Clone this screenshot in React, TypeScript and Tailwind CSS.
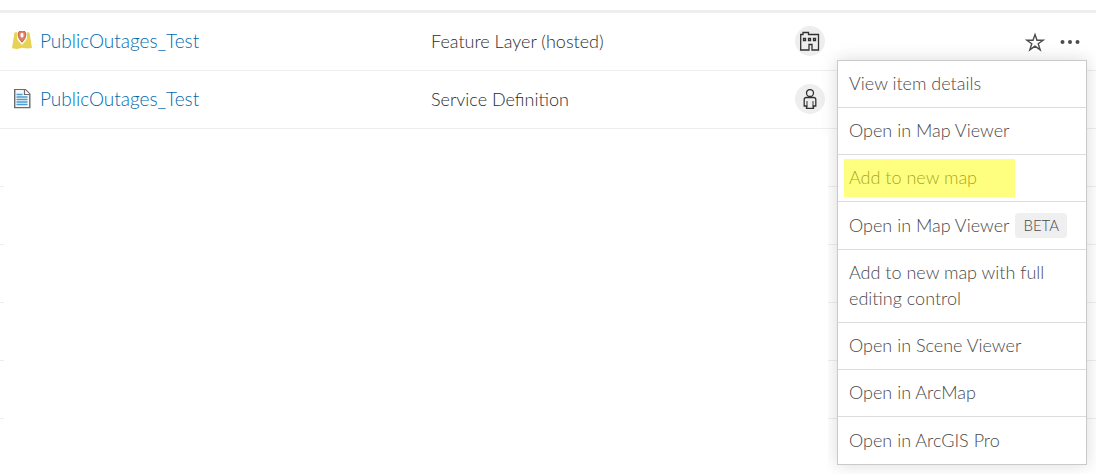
import { ReactNode } from "react";

type Item = {
    title: string;
    type: string;
    icon: ReactNode;
    sharing: "organization" | "owner";
    menuOpen?: boolean;
};

type MenuEntry = {
    label: string;
    highlighted?: boolean;
    beta?: boolean;
};

const menuEntries: MenuEntry[] = [
    { label: "View item details" },
    { label: "Open in Map Viewer" },
    { label: "Add to new map", highlighted: true },
    { label: "Open in Map Viewer", beta: true },
    { label: "Add to new map with full editing control" },
    { label: "Open in Scene Viewer" },
    { label: "Open in ArcMap" },
    { label: "Open in ArcGIS Pro" },
];

function FeatureLayerIcon() {
    return (
        <svg width="20" height="20" viewBox="0 0 20 20" aria-hidden="true">
            <path d="M2.500 1.500 7 1l3 .8 3-.8 4.500.6L20 17l-5 .4-5-.6-5 1.200-5-.7z" fill="#e6d255" />
            <path d="M5 0h10v6.500c0 3-2.500 4.800-5 7.500-2.500-2.700-5-4.500-5-7.500z" fill="#fffbe9" />
            <path d="M10-.3c2.600 0 3.800 1.500 3.800 3.700 0 3-1.600 5.300-3.800 7.800-2.200-2.500-3.800-4.800-3.800-7.800C6.200 1.200 7.400-.3 10-.3z" fill="#dd8064" stroke="#c65d40" />
            <rect x="8.600" y="2" width="2.800" height="4.500" rx="1.200" fill="#fff" />
        </svg>
    );
}

function DocumentIcon() {
    return (
        <svg width="18" height="20" viewBox="0 0 18 20" aria-hidden="true">
            <path d="M1.700.2h10.300l4.800 4.800v13.600H1.700z" fill="#f7f7f7" stroke="#6b6b6b" strokeWidth="1.400" />
            <path d="M11.500.2v5.300h5.300" fill="#fff" stroke="#6b6b6b" strokeWidth="1.200" />
            <path d="M3.500 5.500h6M3.500 8h11M3.500 10.500h11M3.500 13h11M3.500 15.500h11" stroke="#4b9cd3" strokeWidth="1.300" />
        </svg>
    );
}

function OrganizationIcon() {
    return (
        <svg width="20" height="20" viewBox="0 0 20 20" fill="none" stroke="#323232" strokeWidth="1.300" aria-hidden="true">
            <path d="M.7 19V3.500h2.300V1.500h5.500v2h10V19h-6.500v-5.500h-3V19z" />
            <path d="M3.500 7.500h2v2h-2zM8.500 7.500h2v2h-2zM13.500 7.500h2v2h-2z" />
        </svg>
    );
}

function OwnerIcon() {
    return (
        <svg width="20" height="20" viewBox="0 0 20 20" fill="none" stroke="#323232" strokeWidth="1.300" aria-hidden="true">
            <circle cx="10" cy="4" r="3.500" />
            <path d="M6.500 8.500h7c1.600 0 2.300.8 2.300 2v6.500h-2.300v2.300h-7v-2.300H4.200v-6.500c0-1.200.7-2 2.300-2z" />
            <path d="M7 12v6.500M13 12v6.500" strokeWidth="1" />
        </svg>
    );
}

function StarIcon() {
    return (
        <svg width="20" height="20" viewBox="0 0 20 20" fill="none" stroke="#4c4c4c" strokeWidth="1.400" aria-hidden="true">
            <path d="m10 2.500 2 5.700h6.200l-5 3.600 2 6.100-5.200-3.700-5.200 3.700 2-6.100-5-3.600H8z" />
        </svg>
    );
}

function MoreIcon() {
    return (
        <svg width="20" height="20" viewBox="0 0 20 20" fill="#4c4c4c" aria-hidden="true">
            <circle cx="2.500" cy="10" r="2" />
            <circle cx="10" cy="10" r="2" />
            <circle cx="17.500" cy="10" r="2" />
        </svg>
    );
}

const items: Item[] = [
    { title: "PublicOutages_Test", type: "Feature Layer (hosted)", icon: <FeatureLayerIcon />, sharing: "organization", menuOpen: true },
    { title: "PublicOutages_Test", type: "Service Definition", icon: <DocumentIcon />, sharing: "owner" },
];

function ItemMenu() {
    return (
        <ul className="absolute top-[47px] right-[9px] z-10 w-[250px] border border-[#cacaca] bg-white text-[#4a4a4a] shadow-[0_0_16px_rgba(0,0,0,0.15)]">
            {menuEntries.map((entry, index) => (
                <li key={index} className="relative border-b border-[#dcdcdc] last:border-b-0 last:pt-px">
                    <button type="button" className="block w-full px-[11px] pt-[9px] pb-[11px] text-left leading-[26px]">
                        {entry.beta ? (
                            <span className="flex items-end gap-[6px] pt-px">
                                {entry.label}
                                <span className="rounded bg-[#efefef] px-2 text-[15px] leading-[25px]">BETA</span>
                            </span>
                        ) : (
                            entry.label
                        )}
                    </button>
                    {entry.highlighted && (
                        <span className="pointer-events-none absolute top-1 left-[6px] h-[38px] w-[171px] bg-[#ffff00]/50" />
                    )}
                </li>
            ))}
        </ul>
    );
}

export default function App() {
    return (
        <main className="overflow-hidden bg-white pt-[10px] pb-[7px] font-['Lato',sans-serif] text-[18px] leading-[26px] font-light text-[#2c2c2c]">
            <div className="border-t-3 border-[#eeeeee]">
                <table className="w-full table-fixed border-separate border-spacing-0">
                    <colgroup>
                        <col className="w-[431px]" />
                        <col />
                        <col className="w-[30px]" />
                        <col className="w-[271px]" />
                    </colgroup>
                    <tbody>
                        {items.map((item) => (
                            <tr key={item.type} className="h-[58px] *:border-b *:border-[#eeeeee]">
                                <td className="pb-px pl-3">
                                    <a href="#" className="flex items-center gap-2 text-[19px] text-[#006bb0]">
                                        <span className="flex w-5 justify-center">{item.icon}</span>
                                        {item.title}
                                    </a>
                                </td>
                                <td className="pb-px">{item.type}</td>
                                <td className="pb-px">
                                    <span className="flex size-[30px] items-center justify-center rounded-full bg-[#eeeeee]">
                                        {item.sharing === "organization" ? <OrganizationIcon /> : <OwnerIcon />}
                                    </span>
                                </td>
                                <td className="relative pt-px">
                                    {item.menuOpen && (
                                        <>
                                            <div className="flex justify-end gap-[15px] pr-4">
                                                <button type="button" aria-label="Add to favorites">
                                                    <StarIcon />
                                                </button>
                                                <button type="button" aria-label="More options" aria-expanded="true">
                                                    <MoreIcon />
                                                </button>
                                            </div>
                                            <ItemMenu />
                                        </>
                                    )}
                                </td>
                            </tr>
                        ))}
                    </tbody>
                </table>
            </div>

            {/* blank rows, cleared between the left edge and the menu */}
            <div className="flex">
                <div className="w-1">
                    {[0, 1, 2, 3, 4].map((row) => (
                        <div key={row} className="h-[58px] border-b border-[#eeeeee]" />
                    ))}
                </div>
                <div className="relative z-20 mt-[6px] h-[332px] flex-1 bg-white" />
                <div className="w-[268px]">
                    {[0, 1, 2, 3, 4].map((row) => (
                        <div key={row} className="h-[58px] border-b border-[#eeeeee]" />
                    ))}
                </div>
            </div>
        </main>
    );
}
